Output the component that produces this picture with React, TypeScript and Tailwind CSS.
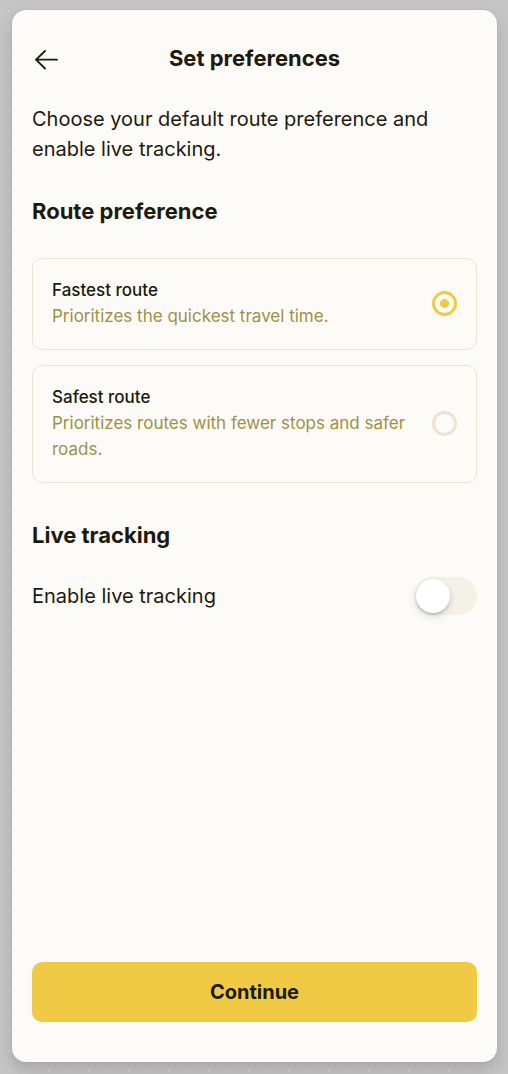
import { useState } from "react";

const routes = [
  {
    id: "fastest",
    title: "Fastest route",
    description: "Prioritizes the quickest travel time.",
  },
  {
    id: "safest",
    title: "Safest route",
    description: "Prioritizes routes with fewer stops and safer roads.",
  },
];

export default function App() {
  const [route, setRoute] = useState("fastest");
  const [tracking, setTracking] = useState(false);

  return (
    <div className="flex min-h-screen flex-col bg-[#c5c5c5] bg-[radial-gradient(circle,#d6d4a8_1px,transparent_1px)] bg-[length:20px_20px] bg-[position:-1px_1px] pt-[10px] pr-[11px] pb-3 pl-3 font-['Inter','Liberation_Sans',sans-serif] text-[#1c1a0d]">
      <main className="flex grow flex-col rounded-[14px] bg-[#fcfbf8] px-5 pb-10 shadow-[0_0_1px_rgba(0,0,0,0.2),0_8px_16px_rgba(0,0,0,0.15)]">
        <header className="grid grid-cols-[48px_1fr_48px] items-center pt-6">
          <button type="button" aria-label="Back" className="flex h-12 items-center pt-1 pl-[3px]">
            <svg width="23" height="20" viewBox="0 0 23 20" fill="none" stroke="currentColor" strokeWidth="1.8" strokeLinecap="round" strokeLinejoin="round">
              <path d="M22 9.7H1M10 1L1 9.7l9 8.8" />
            </svg>
          </button>
          <h1 className="text-center text-[22px] leading-7 font-bold">Set preferences</h1>
        </header>
        <p className="pt-[22px] text-[20px] leading-[30px]">
          Choose your default route preference and enable live tracking.
        </p>
        <fieldset>
          <legend className="pt-[33px] text-[22px] leading-7 font-bold">Route preference</legend>
          <div className="flex flex-col gap-[15px] pt-[33px]">
            {routes.map((item) => (
              <label key={item.id} className="flex cursor-pointer items-center gap-5 rounded-[10px] border border-[#e8e5d3] px-[19px] pt-[18px] pb-5">
                <span className="flex grow flex-col">
                  <span className="text-[17px] leading-[26px] font-medium">{item.title}</span>
                  <span className="text-[17px] leading-[26px] text-[#9e9147]">{item.description}</span>
                </span>
                <input
                  type="radio"
                  name="route"
                  checked={route === item.id}
                  onChange={() => setRoute(item.id)}
                  className="size-[25px] shrink-0 appearance-none rounded-full border-3 border-[#e8e5d3] checked:border-[#f0ca44] checked:bg-[radial-gradient(circle,#f0ca44_4px,transparent_5px)]"
                />
              </label>
            ))}
          </div>
        </fieldset>
        <h2 className="pt-[38px] text-[22px] leading-7 font-bold">Live tracking</h2>
        <label className="flex items-center justify-between pt-7">
          <span className="text-[20px] leading-[30px]">Enable live tracking</span>
          <input
            type="checkbox"
            role="switch"
            checked={tracking}
            onChange={() => setTracking(!tracking)}
            className="h-[38px] w-[63px] appearance-none rounded-full bg-[#f4f2e6] p-0.5 before:block before:size-[34px] before:rounded-full before:bg-white before:shadow-[0_3px_8px_rgba(0,0,0,0.15),0_2px_2px_rgba(0,0,0,0.12)] checked:bg-[#f0ca44] checked:before:ml-[25px]"
          />
        </label>
        <button type="button" className="mt-auto h-[60px] w-full rounded-[10px] bg-[#f0ca44] text-[20px] font-bold">
          Continue
        </button>
      </main>
    </div>
  );
}
